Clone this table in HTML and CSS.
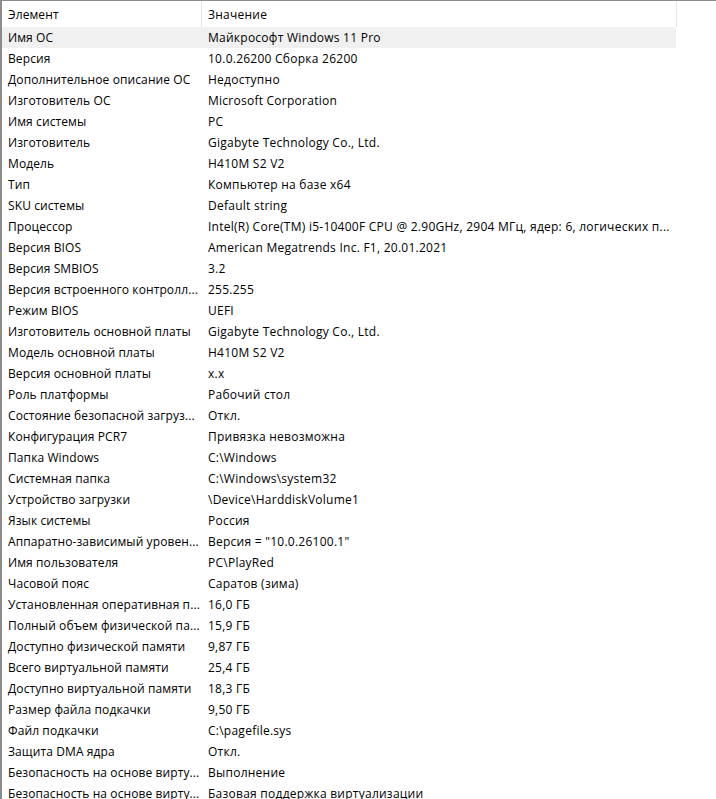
FILE: index.html
```html
<!DOCTYPE html>
<html lang="ru">
<head>
<meta charset="utf-8">
<link rel="stylesheet" href="styles.css">
</head>
<body>
<div class="view">
  <div class="header">
    <div class="hcell c1">Элемент</div>
    <div class="hcell c2">Значение</div>
  </div>
  <div class="rows">
    <div class="row sel"><div class="c1">Имя ОС</div><div class="c2">Майкрософт Windows 11 Pro</div></div>
    <div class="row"><div class="c1">Версия</div><div class="c2">10.0.26200 Сборка 26200</div></div>
    <div class="row"><div class="c1">Дополнительное описание ОС</div><div class="c2">Недоступно</div></div>
    <div class="row"><div class="c1">Изготовитель ОС</div><div class="c2">Microsoft Corporation</div></div>
    <div class="row"><div class="c1">Имя системы</div><div class="c2">PC</div></div>
    <div class="row"><div class="c1">Изготовитель</div><div class="c2">Gigabyte Technology Co., Ltd.</div></div>
    <div class="row"><div class="c1">Модель</div><div class="c2">H410M S2 V2</div></div>
    <div class="row"><div class="c1">Тип</div><div class="c2">Компьютер на базе x64</div></div>
    <div class="row"><div class="c1">SKU системы</div><div class="c2">Default string</div></div>
    <div class="row"><div class="c1">Процессор</div><div class="c2">Intel(R) Core(TM) i5-10400F CPU @ 2.90GHz, 2904 МГц, ядер: 6, логических п...</div></div>
    <div class="row"><div class="c1">Версия BIOS</div><div class="c2">American Megatrends Inc. F1, 20.01.2021</div></div>
    <div class="row"><div class="c1">Версия SMBIOS</div><div class="c2">3.2</div></div>
    <div class="row"><div class="c1">Версия встроенного контролл...</div><div class="c2">255.255</div></div>
    <div class="row"><div class="c1">Режим BIOS</div><div class="c2">UEFI</div></div>
    <div class="row"><div class="c1">Изготовитель основной платы</div><div class="c2">Gigabyte Technology Co., Ltd.</div></div>
    <div class="row"><div class="c1">Модель основной платы</div><div class="c2">H410M S2 V2</div></div>
    <div class="row"><div class="c1">Версия основной платы</div><div class="c2">x.x</div></div>
    <div class="row"><div class="c1">Роль платформы</div><div class="c2">Рабочий стол</div></div>
    <div class="row"><div class="c1">Состояние безопасной загруз...</div><div class="c2">Откл.</div></div>
    <div class="row"><div class="c1">Конфигурация PCR7</div><div class="c2">Привязка невозможна</div></div>
    <div class="row"><div class="c1">Папка Windows</div><div class="c2">C:\Windows</div></div>
    <div class="row"><div class="c1">Системная папка</div><div class="c2">C:\Windows\system32</div></div>
    <div class="row"><div class="c1">Устройство загрузки</div><div class="c2">\Device\HarddiskVolume1</div></div>
    <div class="row"><div class="c1">Язык системы</div><div class="c2">Россия</div></div>
    <div class="row"><div class="c1">Аппаратно-зависимый уровен...</div><div class="c2">Версия = "10.0.26100.1"</div></div>
    <div class="row"><div class="c1">Имя пользователя</div><div class="c2">PC\PlayRed</div></div>
    <div class="row"><div class="c1">Часовой пояс</div><div class="c2">Саратов (зима)</div></div>
    <div class="row"><div class="c1">Установленная оперативная п...</div><div class="c2">16,0 ГБ</div></div>
    <div class="row"><div class="c1">Полный объем физической па...</div><div class="c2">15,9 ГБ</div></div>
    <div class="row"><div class="c1">Доступно физической памяти</div><div class="c2">9,87 ГБ</div></div>
    <div class="row"><div class="c1">Всего виртуальной памяти</div><div class="c2">25,4 ГБ</div></div>
    <div class="row"><div class="c1">Доступно виртуальной памяти</div><div class="c2">18,3 ГБ</div></div>
    <div class="row"><div class="c1">Размер файла подкачки</div><div class="c2">9,50 ГБ</div></div>
    <div class="row"><div class="c1">Файл подкачки</div><div class="c2">C:\pagefile.sys</div></div>
    <div class="row"><div class="c1">Защита DMA ядра</div><div class="c2">Откл.</div></div>
    <div class="row"><div class="c1">Безопасность на основе вирту...</div><div class="c2">Выполнение</div></div>
    <div class="row"><div class="c1">Безопасность на основе вирту...</div><div class="c2">Базовая поддержка виртуализации</div></div>
  </div>
</div>
</body>
</html>
```

FILE: styles.css
```css
html, body {
  margin: 0;
  padding: 0;
  background: #ffffff;
  overflow: hidden;
}
body {
  font-family: "Open Sans", "Noto Sans", sans-serif;
  font-size: 12px;
  letter-spacing: 0.25px;
  color: #000000;
}
.view {
  width: 716px;
  height: 799px;
  border-top: 1px solid #8c8c8c;
  border-left: 2px solid #8c8c8c;
  box-sizing: border-box;
  overflow: hidden;
}
.header {
  display: flex;
  height: 26px;
  align-items: center;
}
.hcell {
  height: 100%;
  display: flex;
  align-items: center;
  box-sizing: border-box;
}
.header .c1 {
  border-right: 1px solid #e5e5e5;
}
.header .c2 {
  border-right: 1px solid #e5e5e5;
}
.c1 {
  width: 200px;
  padding-left: 6px;
  box-sizing: border-box;
  white-space: nowrap;
  overflow: visible;
  letter-spacing: 0.1px;
  flex: none;
}
.c2 {
  width: 475px;
  padding-left: 6px;
  box-sizing: border-box;
  white-space: nowrap;
  overflow: hidden;
  flex: none;
}
.rows {
  display: flex;
  flex-direction: column;
}
.row {
  display: flex;
  height: 21px;
  align-items: center;
  width: 674px;
  flex: none;
}
.row.sel {
  background: #f0f0f0;
}
```
